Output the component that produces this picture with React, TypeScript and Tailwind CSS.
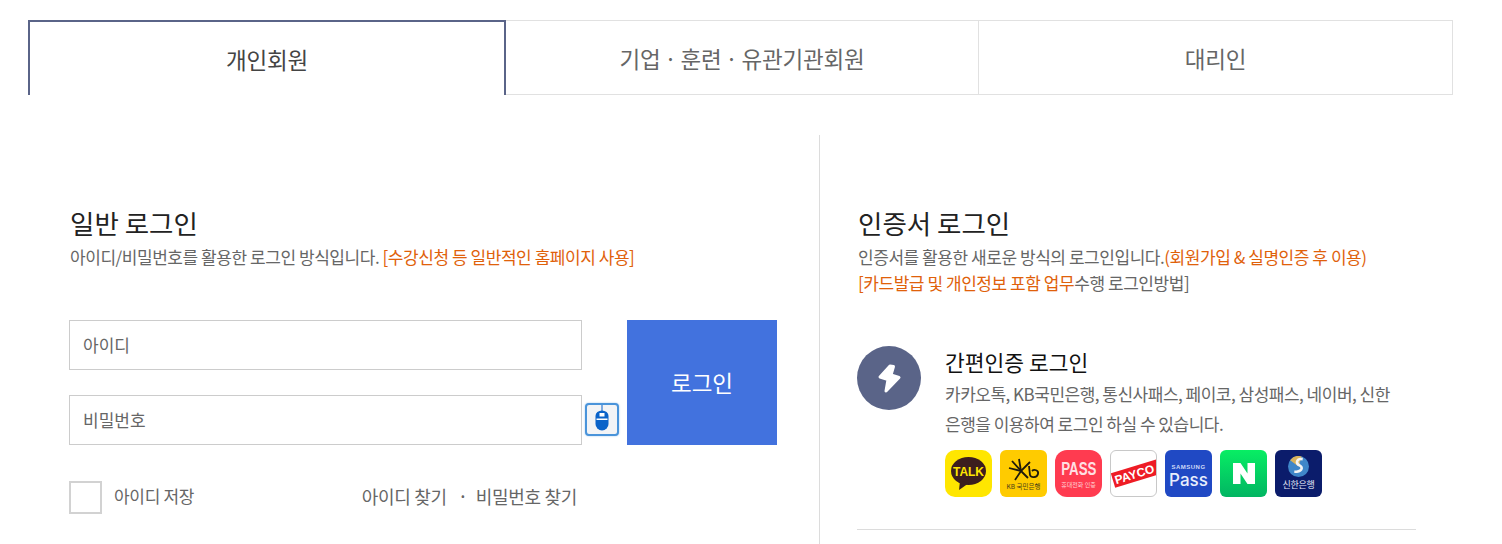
const FONT = "font-['Noto_Sans_CJK_KR','Noto_Sans',sans-serif]";

function MouseIcon() {
  return (
    <div className="w-[34px] h-[33px] rounded-[4px] border-2 border-[#4a94da] bg-[#f3f4f6] flex items-start justify-center shadow-[0_0_2px_#9cc4ec]">
      <svg width="14" height="27" viewBox="0 0 14 27">
        <path d="M7 0v6" stroke="#0b63c9" strokeWidth="1" />
        <path d="M0.5 11a6.500 5.500 0 0 1 13 0v8a6.500 6.500 0 0 1-13 0z" fill="#0b63c9" />
        <rect x="4.500" y="8" width="5" height="3.500" fill="#fff" />
        <rect x="1.500" y="13.500" width="11" height="1.500" fill="#fff" />
      </svg>
    </div>
  );
}

function Talk() {
  return (
    <div className="w-[47px] h-[47px] rounded-[10px] bg-[#ffe600] flex items-center justify-center">
      <svg width="37" height="36" viewBox="0 0 37 36">
        <ellipse cx="18.500" cy="15" rx="17.500" ry="14" fill="#3c1e1e" />
        <path d="M10 25l-1 9 10-7z" fill="#3c1e1e" />
        <text x="18.500" y="20" textAnchor="middle" fontSize="12" fontWeight="700" fill="#ffe600" fontFamily="Liberation Sans">TALK</text>
      </svg>
    </div>
  );
}

function Kb() {
  return (
    <div className="w-[47px] h-[47px] rounded-[6px] bg-[#ffcb00] flex flex-col items-center">
      <svg width="32" height="24" viewBox="0 0 32 24" className="mt-[8px]">
        <path d="M1 10l12 3 9-9" stroke="#1f1a0c" strokeWidth="1.800" fill="none" />
        <path d="M11 1l2 12-6 9M13 13l7 7M4 3l9 10" stroke="#1f1a0c" strokeWidth="1.800" fill="none" />
        <path d="M21 8l1 9c1 3 7 3 8-1s-4-5-6-3" stroke="#1f1a0c" strokeWidth="1.800" fill="none" />
      </svg>
      <span className="text-[6.500px] leading-[7px] mt-[1px] text-[#4a3f1a] whitespace-nowrap">KB 국민은행</span>
    </div>
  );
}

function Pass() {
  return (
    <div className="w-[47px] h-[47px] rounded-[12px] bg-[#ff3b50] flex flex-col items-center">
      <span className="mt-[9px] text-[18px] leading-[20px] font-bold font-['Liberation_Sans',sans-serif] text-[#ffdfe2] scale-x-[0.74]">PASS</span>
      <span className="mt-[2px] text-[6px] leading-[7px] whitespace-nowrap text-[#ffd0d5]">휴대전화 인증</span>
    </div>
  );
}

function Payco() {
  return (
    <div className="w-[47px] h-[47px] rounded-[6px] bg-white border border-[#c8c8c8] overflow-hidden flex items-center">
      <div className="w-[60px] h-[15px] shrink-0 ml-[2px] bg-[#ee1c25] origin-left translate-y-[7px] -rotate-[17deg] flex items-center pl-[2px] text-white text-[12px] leading-none font-bold font-['Liberation_Sans',sans-serif]">PAYCO</div>
    </div>
  );
}

function SamsungPass() {
  return (
    <div className="w-[47px] h-[47px] rounded-[6px] bg-[#2049c4] flex flex-col items-center text-[#e8eefc]">
      <span className="mt-[14px] text-[6px] leading-[7px] font-bold tracking-[0.5px] font-['Liberation_Sans',sans-serif] text-[#cfdaf7]">SAMSUNG</span>
      <span className="text-[17px] leading-[19px] font-medium font-['Inter',sans-serif]">Pass</span>
    </div>
  );
}

function Naver() {
  return (
    <div className="w-[47px] h-[47px] rounded-[6px] bg-gradient-to-b from-[#08ee63] to-[#02b562] flex items-center justify-center">
      <svg width="22" height="21" viewBox="0 0 22 21">
        <path d="M0 0h7.500l7 10.500V0H22v21h-7.500l-7-10.500V21H0z" fill="#fff" />
      </svg>
    </div>
  );
}

function Shinhan() {
  return (
    <div className="w-[47px] h-[47px] rounded-[6px] bg-[#0b1c6b] flex flex-col items-center">
      <svg width="21" height="21" viewBox="0 0 20 20" className="mt-[6px]">
        <circle cx="10" cy="10" r="10" fill="#3f86c9" />
        <path d="M2 4a10 10 0 0 1 11-3.500l-3 9.500z" fill="#d9b25c" />
        <path d="M14 3c-6-1-7 4-3 6s2 6-5 6" stroke="#f4f4f4" strokeWidth="2.500" fill="none" />
      </svg>
      <span className="mt-[2px] text-[9px] leading-[11px] whitespace-nowrap text-[#e6eaf7] tracking-[-0.3px]">신한은행</span>
    </div>
  );
}

export default function App() {
  return (
    <div className={`${FONT} h-[544px] overflow-hidden bg-white px-[28px] pt-[20px] w-[1502px]`}>
      <div className="flex w-[1425px] h-[75px] text-[22.500px] tracking-[-0.2px] text-[#666]">
        <div className="w-[478px] border-x-2 border-t-2 border-[#5a6488] flex items-center justify-center text-[#444] pt-[2px]">개인회원</div>
        <div className="w-[472px] border-y border-[#e1e1e1] flex items-center justify-center [word-spacing:-1px] pt-[2px]">기업 · 훈련 · 유관기관회원</div>
        <div className="w-[475px] border border-[#e1e1e1] flex items-center justify-center pt-[2px]">대리인</div>
      </div>

      <div className="flex mt-[40px]">
        <section className="w-[792px] h-[420px] border-r border-[#dcdcdc] pl-[41px] pt-[70px] shrink-0">
          <h2 className="text-[26.500px] leading-[36px] text-[#222] pl-[1px]">일반 로그인</h2>
          <p className="text-[17px] leading-[26px] tracking-[-0.45px] text-[#666] mt-[3px] pl-[1px]">
            아이디/비밀번호를 활용한 로그인 방식입니다. <span className="text-[#e0610a]">[수강신청 등 일반적인 홈페이지 사용]</span>
          </p>

          <div className="flex mt-[50px]">
            <div className="w-[513px] flex flex-col gap-[25px]">
              <div className="h-[50px] border border-[#ccc] px-[13px] flex items-center text-[17px] text-[#666]">아이디</div>
              <div className="h-[50px] border border-[#ccc] px-[13px] flex items-center text-[17px] text-[#666]">비밀번호</div>
            </div>
            <div className="w-[45px] flex items-end pb-[9px] pl-[3px]">
              <MouseIcon />
            </div>
            <div className="w-[150px] h-[125px] bg-[#4272de] text-white text-[22.500px] flex items-center justify-center">로그인</div>
          </div>

          <div className="flex items-center w-[508px] mt-[36px] tracking-[-0.3px] text-[#666]">
            <div className="w-[33px] h-[33px] border-2 border-[#d2d2d2]" />
            <span className="ml-[12px] text-[17px] pb-[3px]">아이디 저장</span>
            <span className="ml-auto text-[18px] pb-[3px]">아이디 찾기</span>
            <span className="ml-[12px] mr-[9px] text-[14px] font-bold pb-[3px]">·</span>
            <span className="text-[18px] pb-[3px]">비밀번호 찾기</span>
          </div>
        </section>

        <section className="pl-[37px] pt-[70px] w-[597px] shrink-0">
          <h2 className="text-[26.500px] leading-[36px] text-[#222] pl-[1px]">인증서 로그인</h2>
          <p className="text-[17px] leading-[26px] tracking-[-0.45px] text-[#666] mt-[3px] pl-[1px]">
            인증서를 활용한 새로운 방식의 로그인입니다.<span className="text-[#e0610a]">(회원가입 &amp; 실명인증 후 이용)</span>
            <br />
            <span className="text-[#e0610a]">[카드발급 및 개인정보 포함 업무</span>수행 로그인방법]
          </p>

          <div className="flex mt-[50px] border-b border-[#dcdcdc] pb-[32px] w-[559px]">
            <div className="w-[64px] h-[64px] rounded-full bg-[#5a6488] flex items-center justify-center shrink-0">
              <svg width="25" height="31" viewBox="0 0 25 31">
                <path d="M13 3L3 14l8 2.500L9 28l13-13.500-8-2.500 2.500-8.500z" fill="#fff" stroke="#fff" strokeWidth="3" strokeLinejoin="round" />
              </svg>
            </div>
            <div className="ml-[24px] w-[471px]">
              <h3 className="text-[21.500px] leading-[28px] text-[#111] mt-[2px]">간편인증 로그인</h3>
              <p className="text-[17px] leading-[30px] tracking-[-0.5px] text-[#666] mt-[3px]">
                카카오톡, KB국민은행, 통신사패스, 페이코, 삼성패스, 네이버, 신한<br />은행을 이용하여 로그인 하실 수 있습니다.
              </p>
              <div className="flex gap-[8px] mt-[11px]">
                <Talk />
                <Kb />
                <Pass />
                <Payco />
                <SamsungPass />
                <Naver />
                <Shinhan />
              </div>
            </div>
          </div>
        </section>
      </div>
    </div>
  );
}
